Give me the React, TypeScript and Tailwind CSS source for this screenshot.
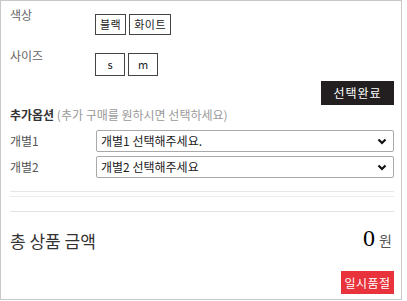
const font = { fontFamily: '"Noto Sans CJK KR", "Noto Sans", sans-serif' };

function Chevron() {
  return (
    <svg width="10" height="7" viewBox="0 0 10 7" className="shrink-0">
      <polyline points="1.5,1.5 5,5 8.5,1.5" fill="none" stroke="#111" strokeWidth="2.2" />
    </svg>
  );
}

function OptionSelect({ text }: { text: string }) {
  return (
    <div className="flex h-[22px] flex-1 items-center justify-between rounded-[2px] border border-[#a9a9a9] pl-[4px] pr-[6px] text-[12px] text-[#222]">
      <span>{text}</span>
      <Chevron />
    </div>
  );
}

export default function App() {
  const colors = ['블랙', '화이트'];
  const sizes = ['s', 'm'];

  return (
    <div style={font} className="h-[300px] w-[402px] border border-[#c8c8c8] bg-white">
      <div className="flex flex-col pl-[9px] pr-[7px] pt-[6px]">
        {/* 색상 */}
        <div className="flex items-start">
          <div className="mt-[1px] w-[85px] text-[12px] leading-[14px] text-[#666]">색상</div>
          <div className="mt-[7px] flex gap-[3px]">
            {colors.map((c) => (
              <div
                key={c}
                className="flex h-[21px] items-center border border-[#444] px-[4px] text-[11px] tracking-[0.5px] text-[#222]"
              >
                {c}
              </div>
            ))}
          </div>
        </div>

        {/* 사이즈 */}
        <div className="mt-[13px] flex items-start">
          <div className="mt-[1px] w-[85px] text-[12px] leading-[14px] text-[#666]">사이즈</div>
          <div className="mt-[5px] flex gap-[3px]">
            {sizes.map((s) => (
              <div
                key={s}
                className="flex h-[23px] w-[30px] items-center justify-center border border-[#444] text-[11px] text-[#222]"
              >
                {s}
              </div>
            ))}
          </div>
        </div>

        <div className="mt-[5px] flex justify-end">
          <div className="flex h-[24px] w-[73px] items-center justify-center bg-[#231f20] text-[12px] tracking-[1px] text-white">
            선택완료
          </div>
        </div>

        {/* 추가옵션 */}
        <div className="mt-[3px] text-[12px] leading-[14px]">
          <span className="font-bold text-[#333]">추가옵션</span>
          <span className="text-[#999]"> (추가 구매를 원하시면 선택하세요)</span>
        </div>

        <div className="mt-[8px] flex flex-col gap-[4px]">
          <div className="flex items-center">
            <div className="w-[86px] text-[12px] text-[#555]">개별1</div>
            <OptionSelect text="개별1 선택해주세요." />
          </div>
          <div className="flex items-center">
            <div className="w-[86px] text-[12px] text-[#555]">개별2</div>
            <OptionSelect text="개별2 선택해주세요" />
          </div>
        </div>

        <div className="mt-[13px] h-px bg-[#e6e6e6]" />
        <div className="mt-[4px] h-px bg-[#ececec]" />
        <div className="mt-[14px] h-px bg-[#e3e3e3]" />

        {/* 총 상품 금액 */}
        <div className="mt-[14px] flex items-end justify-between">
          <div className="text-[17px] leading-[20px] text-[#333]">총 상품 금액</div>
          <div className="flex items-baseline gap-[4px] pr-[2px]">
            <span style={{ fontFamily: '"Liberation Serif", serif' }} className="text-[24px] leading-[24px] text-black">
              0
            </span>
            <span className="text-[14px] text-[#555]">원</span>
          </div>
        </div>

        <div className="mt-[20px] flex justify-end">
          <div className="flex h-[23px] w-[53px] items-center justify-center bg-[#e8333c] text-[12px] tracking-[0.5px] text-white">
            일시품절
          </div>
        </div>
      </div>
    </div>
  );
}
